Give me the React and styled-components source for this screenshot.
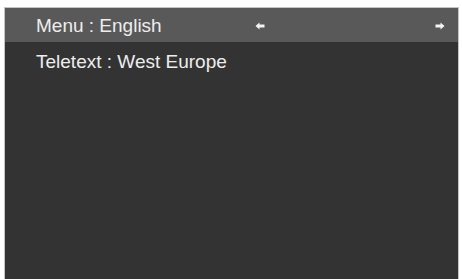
import React from "react";
import styled, { createGlobalStyle } from "styled-components";

const GlobalStyle = createGlobalStyle`
  html, body {
    margin: 0;
    padding: 0;
    background: #ffffff;
    font-family: "Liberation Sans", Arial, sans-serif;
  }
`;

const Arrow = ({ dir }) => (
  <svg width="10" height="8" viewBox="0 0 10 8">
    <path
      d={
        dir === "left"
          ? "M0.5 4 L4.5 0.5 L4.5 2.5 L9.5 2.5 L9.5 5.5 L4.5 5.5 L4.5 7.5 Z"
          : "M9.5 4 L5.5 0.5 L5.5 2.5 L0.5 2.5 L0.5 5.5 L5.5 5.5 L5.5 7.5 Z"
      }
      fill="#f4f4f4"
    />
  </svg>
);

const items = [
  { label: "Menu : English", selected: true },
  { label: "Teletext : West Europe" },
];

const App = () => (
  <>
    <GlobalStyle />
    <Page>
      <Panel>
        {items.map((item) => (
          <Row key={item.label} selected={item.selected}>
            <Label>{item.label}</Label>
            {item.selected && (
              <Arrows>
                <Arrow dir="left" />
                <Arrow dir="right" />
              </Arrows>
            )}
          </Row>
        ))}
      </Panel>
    </Page>
  </>
);

export default App;

// Styled Components

const Page = styled.div`
  width: 462px;
  height: 279px;
  padding: 7px 3px 0 4px;
  box-sizing: border-box;
  overflow: hidden;
`;

const Panel = styled.div`
  height: 290px;
  background: #333333;
  border: 1px solid #c4c4c4;
  border-bottom: none;
  display: flex;
  flex-direction: column;
`;

const Row = styled.div`
  display: flex;
  align-items: center;
  height: 34px;
  padding: ${({ selected }) => (selected ? "2px 0 0 31px" : "5px 0 0 31px")};
  box-sizing: border-box;
  background: ${({ selected }) => (selected ? "#595959" : "transparent")};
`;

const Label = styled.span`
  width: 219px;
  font-size: 19px;
  line-height: 22px;
  color: #ededed;
`;

const Arrows = styled.div`
  display: flex;
  align-items: center;
  justify-content: space-between;
  width: 190px;
  margin-bottom: 1px;
`;
